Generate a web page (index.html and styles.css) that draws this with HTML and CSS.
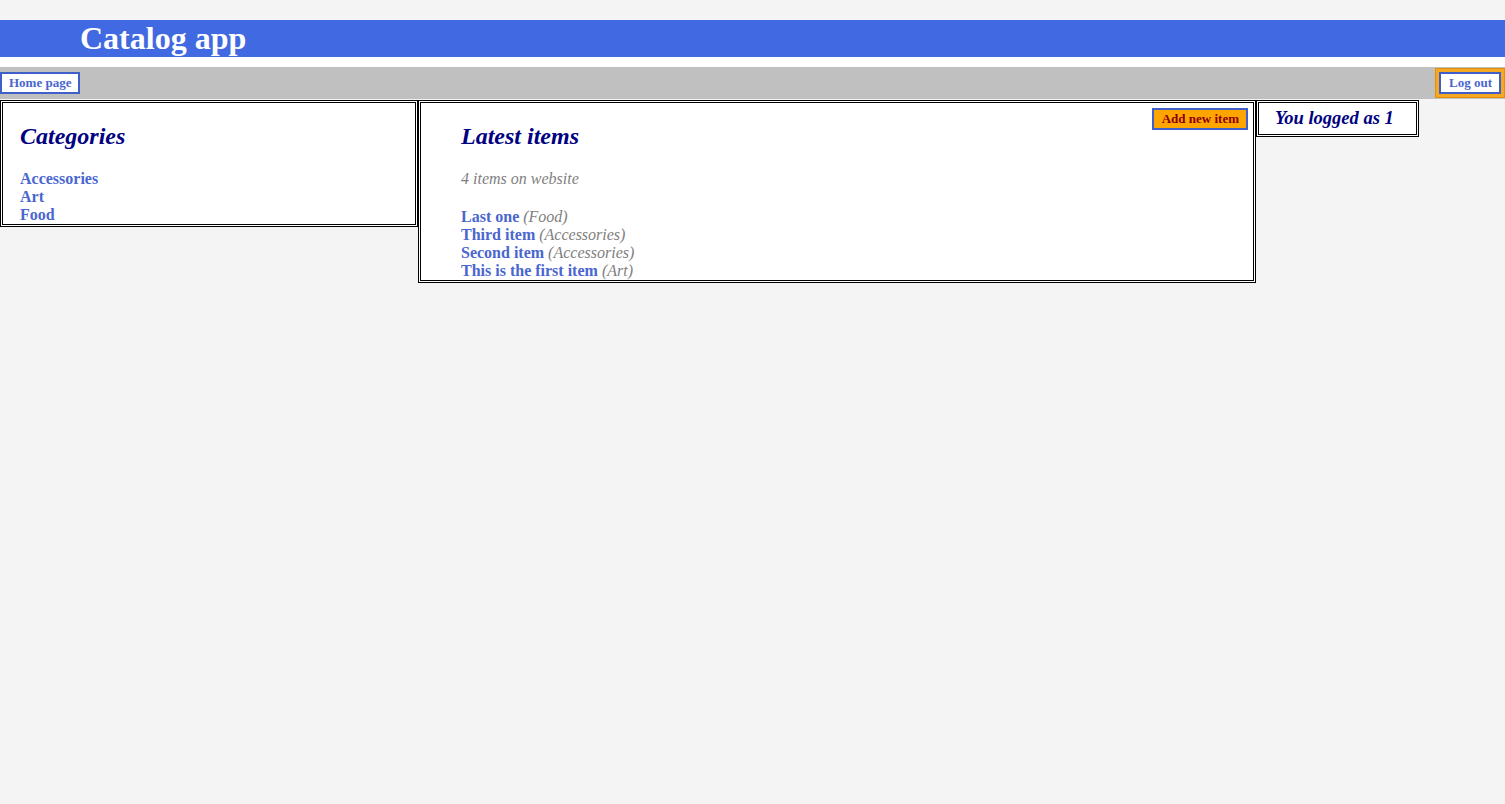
FILE: index.html
```html
<!DOCTYPE html>
<html>
<head>
<meta charset="utf-8">
<title>Catalog app</title>
<link rel="stylesheet" href="styles.css">
</head>
<body>
<header class="header">
  <h1 class="title">Catalog app</h1>
</header>
<nav class="nav">
  <a class="btn" href="#">Home page</a>
  <span class="focus-ring"><a class="btn" href="#">Log out</a></span>
</nav>
<main class="main">
  <section class="panel panel-left">
    <h2 class="panel-title">Categories</h2>
    <ul class="list">
      <li><a class="link" href="#">Accessories</a></li>
      <li><a class="link" href="#">Art</a></li>
      <li><a class="link" href="#">Food</a></li>
    </ul>
  </section>
  <section class="panel panel-mid">
    <a class="btn btn-add" href="#">Add new item</a>
    <h2 class="panel-title">Latest items</h2>
    <p class="count">4 items on website</p>
    <ul class="list">
      <li><a class="link" href="#">Last one</a> <span class="cat">(Food)</span></li>
      <li><a class="link" href="#">Third item</a> <span class="cat">(Accessories)</span></li>
      <li><a class="link" href="#">Second item</a> <span class="cat">(Accessories)</span></li>
      <li><a class="link" href="#">This is the first item</a> <span class="cat">(Art)</span></li>
    </ul>
  </section>
  <section class="panel panel-right">
    <span class="user">You logged as 1</span>
  </section>
</main>
</body>
</html>
```
FILE: styles.css
```css
html, body {
  margin: 0;
  padding: 0;
}
body {
  background: #f4f4f4;
  font-family: "Liberation Serif", "Times New Roman", serif;
  padding-top: 20px;
}
.header {
  background: #ffffff;
  padding-bottom: 10px;
}
.title {
  margin: 0;
  background: #4169e1;
  color: #ffffff;
  font-size: 32px;
  font-weight: bold;
  line-height: 36px;
  height: 37px;
  padding-left: 80px;
}
.nav {
  background: #c0c0c0;
  height: 32px;
  display: flex;
  align-items: center;
  justify-content: space-between;
}
.btn {
  display: inline-block;
  box-sizing: border-box;
  height: 22px;
  line-height: 18px;
  padding: 0 7px;
  border: 2px solid #3f5fc9;
  background: #ffffff;
  color: #4a66cf;
  font-size: 13px;
  font-weight: bold;
  text-decoration: none;
}
.focus-ring {
  display: inline-block;
  border: 1px solid #e0900a;
  background: #f7a823;
  padding: 3px;
}
.focus-ring .btn {
  display: block;
  padding: 0 7px 0 8px;
}
.main {
  display: flex;
  align-items: flex-start;
  margin-top: 1px;
}
.panel {
  box-sizing: border-box;
  border: 3px double #000000;
  background: #ffffff;
}
.panel-left {
  width: 418px;
  padding: 0 16px 0 17px;
}
.panel-mid {
  width: 838px;
  padding: 0 5px 0 40px;
}
.panel-right {
  width: 163px;
  height: 37px;
  padding: 0 16px;
  display: flex;
  align-items: center;
}
.panel-title {
  margin: 19px 0 20px;
  font-size: 24px;
  line-height: 28px;
  font-style: italic;
  font-weight: bold;
  color: #000080;
}
.list {
  list-style: none;
  margin: 0;
  padding: 0;
  font-size: 16px;
  line-height: 18px;
}
.link {
  color: #4a66cf;
  font-weight: bold;
  text-decoration: none;
}
.cat, .count {
  color: #808080;
  font-style: italic;
}
.count {
  margin: 0 0 20px;
  font-size: 16px;
  line-height: 18px;
}
.btn-add {
  float: right;
  margin-top: 5px;
  background: #ffa500;
  color: #8b0000;
  padding: 0 7px 0 8px;
}
.user {
  font-size: 18.5px;
  font-weight: bold;
  font-style: italic;
  color: #000080;
  white-space: nowrap;
}
```
